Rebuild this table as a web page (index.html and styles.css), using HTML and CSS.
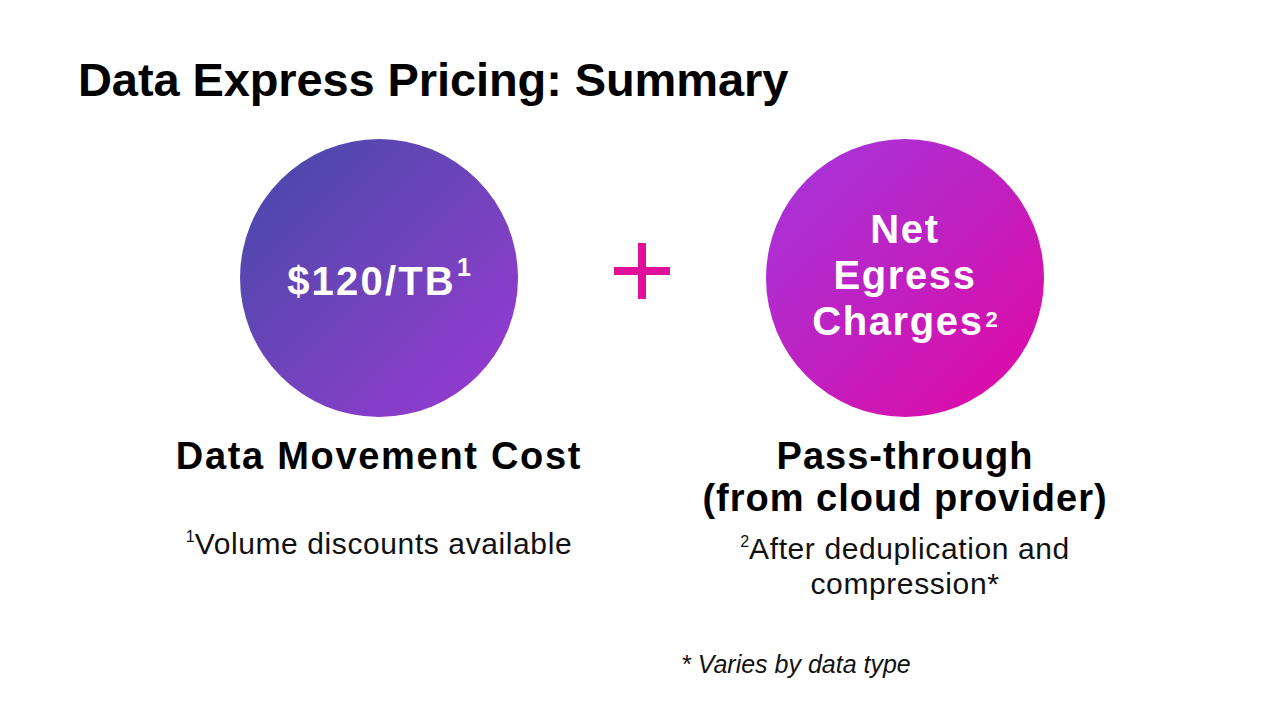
FILE: index.html
```html
<!DOCTYPE html>
<html lang="en">
<head>
<meta charset="utf-8">
<title>Data Express Pricing: Summary</title>
<link rel="stylesheet" href="styles.css">
</head>
<body>
<main class="slide">
  <h1 class="title">Data Express Pricing: Summary</h1>
  <section class="pricing">
    <div class="col">
      <div class="circle circle-blue">
        <span class="price">$120/TB<sup class="price-sup">1</sup></span>
      </div>
      <h2 class="label label-left">Data Movement Cost</h2>
      <p class="note note-left"><sup class="note-sup">1</sup>Volume discounts available</p>
    </div>
    <div class="plus-col">
      <svg class="plus" width="56" height="56" viewBox="0 0 56 56" aria-hidden="true">
        <rect x="24" y="0" width="8" height="56" fill="#e0109c"/>
        <rect x="0" y="24" width="56" height="8" fill="#e0109c"/>
      </svg>
    </div>
    <div class="col">
      <div class="circle circle-pink">
        <span class="egress">Net<br>Egress<br>Charges<sup class="egress-sup">2</sup></span>
      </div>
      <h2 class="label label-right">Pass-through<br>(from cloud provider)</h2>
      <p class="note note-right"><sup class="note-sup">2</sup>After deduplication and<br>compression*</p>
    </div>
  </section>
  <p class="varies">* Varies by data type</p>
</main>
</body>
</html>
```

FILE: styles.css
```css
* {
  box-sizing: border-box;
}

html, body {
  margin: 0;
  padding: 0;
  background: #ffffff;
}

.slide {
  width: 1280px;
  height: 720px;
  overflow: hidden;
  display: flex;
  flex-direction: column;
  font-family: "Liberation Sans", Arial, sans-serif;
  color: #000;
}

.title {
  margin: 53px 0 0 78px;
  font-size: 47px;
  line-height: 54px;
  font-weight: 700;
  letter-spacing: -0.1px;
}

.pricing {
  margin: 32px 0 0 159px;
  display: grid;
  grid-template-columns: 440px 86px 440px;
  align-items: start;
}

.col {
  display: flex;
  flex-direction: column;
  align-items: center;
  text-align: center;
}

.plus-col {
  display: flex;
  justify-content: center;
  padding-top: 104px;
}

.plus {
  display: block;
}

.circle {
  width: 278px;
  height: 278px;
  border-radius: 50%;
  display: flex;
  align-items: center;
  justify-content: center;
  color: #fff;
  font-weight: 700;
  text-align: center;
}

.circle-blue {
  background: linear-gradient(135deg, #4349a8 0%, #6f44bb 50%, #9d37d6 100%);
  padding-top: 6px;
}

.circle-pink {
  background: linear-gradient(135deg, #a238de 0%, #c020c0 50%, #e406a2 100%);
  padding-bottom: 6px;
}

.price {
  font-size: 40px;
  line-height: 40px;
  letter-spacing: 2.2px;
}

.price-sup {
  font-size: 25px;
  line-height: 0;
  vertical-align: 19px;
  letter-spacing: 0;
  margin-left: 1px;
}

.egress {
  font-size: 40px;
  line-height: 46px;
  letter-spacing: 1.6px;
}

.egress-sup {
  font-size: 22px;
  line-height: 0;
  vertical-align: 8px;
  letter-spacing: 0;
  margin-left: 2px;
}

.label {
  margin: 18px 0 0;
  font-size: 38px;
  line-height: 42px;
  font-weight: 700;
}

.label-left {
  letter-spacing: 1.7px;
}

.label-right {
  letter-spacing: 1px;
}

.note {
  margin: 0;
  font-size: 30px;
  line-height: 35px;
  font-weight: 400;
  letter-spacing: 0.6px;
  color: #111;
}

.note-left {
  margin-top: 49px;
}

.note-right {
  margin-top: 12px;
}

.note-sup {
  font-size: 16px;
  line-height: 0;
  vertical-align: 12px;
  letter-spacing: 0;
}

.varies {
  margin: 48px 0 0 681px;
  font-size: 25px;
  line-height: 30px;
  font-style: italic;
  color: #111;
}
```
